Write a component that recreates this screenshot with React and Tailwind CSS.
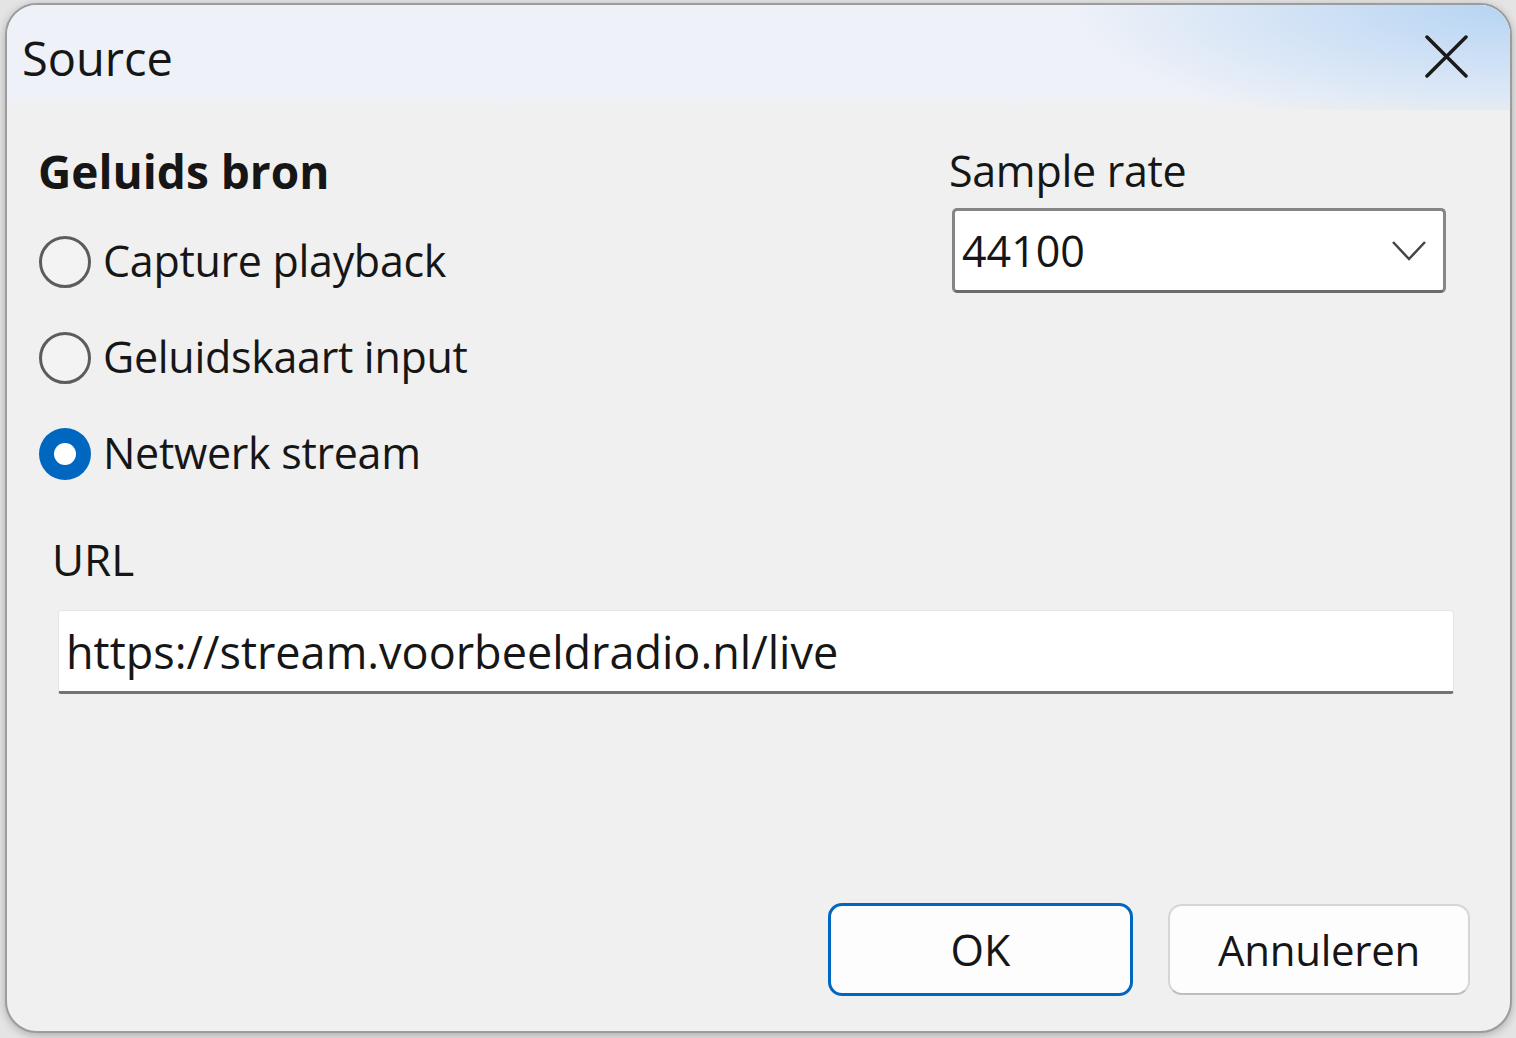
import { useState } from "react";

const SOURCES = ["Capture playback", "Geluidskaart input", "Netwerk stream"];
const font = { fontFamily: '"Open Sans", "Noto Sans", sans-serif' };

function Radio({ checked }) {
  if (checked) {
    return (
      <span className="w-[52px] h-[52px] shrink-0 rounded-full bg-[#0067c0] flex items-center justify-center">
        <span className="w-[22px] h-[22px] rounded-full bg-white" />
      </span>
    );
  }
  return <span className="w-[52px] h-[52px] shrink-0 rounded-full border-[3px] border-[#5c5c5c] bg-[#f3f3f3]" />;
}

export default function App() {
  const [source, setSource] = useState(2);
  const [url, setUrl] = useState("https://stream.voorbeeldradio.nl/live");

  return (
    <div className="w-[1516px] h-[1038px] bg-[#e4e4e4] pt-[3px] pl-[5px] overflow-hidden" style={font}>
      <div className="w-[1507px] h-[1030px] rounded-[32px] border-2 border-[#9c9c9c] bg-[#f0f0f0] overflow-hidden flex flex-col shadow-[0_2px_8px_rgba(0,0,0,0.25)] text-[#161616]">
        {/* title bar */}
        <div className="h-[105px] shrink-0 flex items-start justify-between bg-[linear-gradient(to_bottom,#eef1f8_85%,#f0f0f0)]">
          <div className="flex-1 flex items-start justify-between h-full bg-[radial-gradient(ellipse_440px_130px_at_100%_0%,#b6d4f3,rgba(238,241,248,0)_100%)]">
            <span className="ml-[15px] mt-[23px] text-[47px] leading-[60px]">Source</span>
            <button className="mr-[42px] mt-[30px] w-[43px] h-[43px]">
              <svg viewBox="0 0 43 43" className="w-[43px] h-[43px]">
                <path d="M2 2 L41 41 M41 2 L2 41" stroke="#1a1a1a" strokeWidth="3.5" strokeLinecap="round" />
              </svg>
            </button>
          </div>
        </div>

        {/* body */}
        <div className="flex-1 flex flex-col">
          <div className="flex justify-between">
            <div className="pl-[32px] pt-[31px]">
              <div className="text-[46px] leading-[60px] font-bold ml-[-1px] mb-[13px]">Geluids bron</div>
              {SOURCES.map((s, i) => (
                <label key={s} onClick={() => setSource(i)} className="h-[96px] flex items-center gap-[12px] cursor-default">
                  <Radio checked={source === i} />
                  <span className="text-[43px] leading-[60px] mt-[-2px] tracking-[-0.3px]">{s}</span>
                </label>
              ))}
            </div>
            <div className="w-[494px] mr-[64px] pt-[31px]">
              <div className="text-[43px] leading-[60px] ml-[-3px] mb-[7px] tracking-[-0.3px]">Sample rate</div>
              <div className="h-[85px] bg-white border-[3px] border-[#858585] border-b-[#6a6a6a] rounded-[5px] flex items-center justify-between pl-[7px] pr-[16px]">
                <span className="text-[43px] leading-[60px]">44100</span>
                <svg viewBox="0 0 36 22" className="w-[36px] h-[22px]">
                  <path d="M2 2 L18 19 L34 2" fill="none" stroke="#454545" strokeWidth="2.5" />
                </svg>
              </div>
            </div>
          </div>

          <div className="pl-[45px] pr-[56px] mt-[27px]">
            <div className="text-[44px] leading-[60px]">URL</div>
            <input
              value={url}
              onChange={(e) => setUrl(e.target.value)}
              className="mt-[21px] w-[1396px] h-[84px] ml-[6px] bg-white border border-[#e4e4e4] border-b-[3px] border-b-[#737373] rounded-[3px] px-[7px] text-[45px] outline-none text-[#161616]"
              style={font}
            />
          </div>

          <div className="flex-1" />

          <div className="flex justify-end items-center gap-[35px] pr-[40px] pb-[35px]">
            <button className="w-[305px] h-[93px] rounded-[14px] border-[3px] border-[#0067c0] bg-[#fdfdfd] text-[43px] leading-[60px]">
              OK
            </button>
            <button className="w-[302px] h-[91px] rounded-[14px] border-2 border-[#d6d6d6] border-b-[#bdbdbd] bg-[#fdfdfd] text-[42px] leading-[60px] tracking-[-0.3px]">
              Annuleren
            </button>
          </div>
        </div>
      </div>
    </div>
  );
}
